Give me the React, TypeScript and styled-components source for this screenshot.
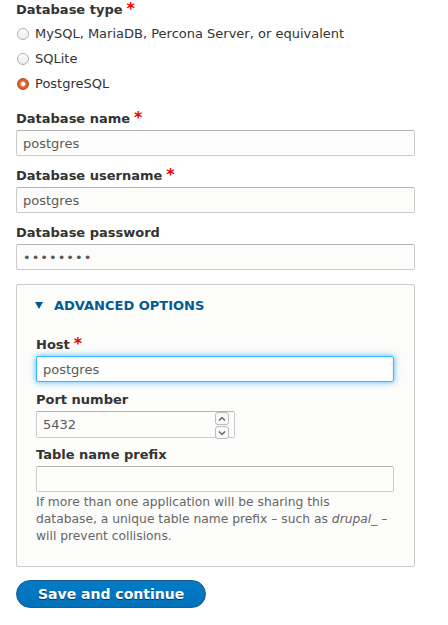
import { useState } from 'react';
import styled, { createGlobalStyle, css } from 'styled-components';

const GlobalStyle = createGlobalStyle`
  html, body {
    margin: 0;
    padding: 0;
    background: #fff;
  }
  body {
    font-family: "DejaVu Sans", "Liberation Sans", sans-serif;
    font-size: 13px;
    color: #333;
  }
`;

const Page = styled.form`
  width: 399px;
  padding: 1px 16px 0;
  display: flex;
  flex-direction: column;
`;

const Item = styled.div<{ $gap?: number }>`
  display: flex;
  flex-direction: column;
  margin-bottom: ${({ $gap }) => ($gap ?? 11)}px;
`;

const Label = styled.label`
  display: block;
  font-weight: bold;
  line-height: 18px;
  margin-bottom: 2px;
  color: #333;
`;

const Required = styled.span`
  color: #e00;
  font-size: 16px;
  margin-left: 4px;
  line-height: 10px;
`;

const RadioRow = styled.label`
  display: flex;
  align-items: center;
  height: 25px;
  color: #333;
  cursor: pointer;
`;

const Radio = styled.span<{ $checked?: boolean }>`
  width: 10px;
  height: 10px;
  border-radius: 50%;
  margin: 0 6px 0 1px;
  box-sizing: content-box;
  ${({ $checked }) =>
    $checked
      ? css`
          border: 1px solid #b8491c;
          background: radial-gradient(circle, #fff 0, #fbe3d8 2px, #e0632f 3px, #d4541f 100%);
        `
      : css`
          border: 1px solid #b0b0b0;
          background: linear-gradient(#fdfdfd, #ececec);
        `}
`;

const TextInput = styled.input<{ $focus?: boolean; $width?: number }>`
  box-sizing: border-box;
  width: ${({ $width }) => ($width ? `${$width}px` : '100%')};
  height: 26px;
  padding: 0 6px;
  font-family: inherit;
  font-size: 13px;
  color: #595959;
  background: #fcfcfa;
  border: 1px solid #ccc;
  border-top-color: #b3b3b3;
  border-radius: 2px;
  outline: none;
  ${({ $focus }) =>
    $focus &&
    css`
      background: #fff;
      border-color: #40b6ff;
      box-shadow: inset 0 1px 3px rgba(0, 0, 0, 0.1), 0 0 6px #40b6ff;
    `}
  &[type='password'] {
    letter-spacing: 1px;
  }
  &::-webkit-inner-spin-button,
  &::-webkit-outer-spin-button {
    -webkit-appearance: none;
    margin: 0;
  }
`;

const NumberWrap = styled.div`
  position: relative;
  width: 199px;
`;

const Spinner = styled.div`
  position: absolute;
  right: 6px;
  top: 1px;
  display: flex;
  flex-direction: column;
  gap: 1px;
`;

const SpinButton = styled.span`
  width: 12px;
  height: 11px;
  border: 1px solid #bbb;
  border-radius: 3px;
  background: #f8f8f8;
  display: flex;
  align-items: center;
  justify-content: center;
`;

const Fieldset = styled.fieldset`
  margin: 14px 0 13px;
  padding: 10px 20px 21px 19px;
  border: 1px solid #ccc;
  border-radius: 2px;
  background: #fcfcfa;
  min-width: 0;
`;

const Summary = styled.div`
  display: flex;
  align-items: center;
  height: 20px;
  margin-bottom: 21px;
  color: #005b94;
  font-weight: bold;
  text-transform: uppercase;
  cursor: pointer;
`;

const Caret = styled.span`
  width: 0;
  height: 0;
  border-left: 4px solid transparent;
  border-right: 4px solid transparent;
  border-top: 7px solid #005b94;
  margin: 0 11px 0 -1px;
`;

const Description = styled.div`
  margin-top: 2px;
  max-width: 352px;
  font-size: 12.3px;
  line-height: 17px;
  color: #666;
`;

const PrimaryButton = styled.button`
  align-self: flex-start;
  height: 28px;
  padding: 0 21px 0 21px;
  border: 1px solid #1e5c90;
  border-radius: 20em;
  background: linear-gradient(to bottom, #007bc6, #0071b8);
  color: #fff;
  font-family: inherit;
  font-size: 14px;
  font-weight: bold;
  text-shadow: 0 1px rgba(0, 0, 0, 0.5);
  cursor: pointer;
`;

const Chevron = ({ up }: { up?: boolean }) => (
  <svg width="8" height="6" viewBox="0 0 8 6">
    <path d={up ? 'M1 4.5 L4 1.5 L7 4.5' : 'M1 1.5 L4 4.5 L7 1.5'} fill="none" stroke="#555" strokeWidth="1.2" />
  </svg>
);

const dbTypes = [
  { id: 'mysql', label: 'MySQL, MariaDB, Percona Server, or equivalent' },
  { id: 'sqlite', label: 'SQLite' },
  { id: 'pgsql', label: 'PostgreSQL' },
];

const App = () => {
  const [dbType, setDbType] = useState('pgsql');

  return (
    <>
      <GlobalStyle />
      <Page onSubmit={(e) => e.preventDefault()}>
        <Item $gap={14}>
          <Label>
            Database type<Required>*</Required>
          </Label>
          {dbTypes.map((t) => (
            <RadioRow key={t.id} onClick={() => setDbType(t.id)}>
              <Radio $checked={dbType === t.id} />
              {t.label}
            </RadioRow>
          ))}
        </Item>

        <Item>
          <Label>
            Database name<Required>*</Required>
          </Label>
          <TextInput defaultValue="postgres" />
        </Item>

        <Item>
          <Label>
            Database username<Required>*</Required>
          </Label>
          <TextInput defaultValue="postgres" />
        </Item>

        <Item $gap={0}>
          <Label>Database password</Label>
          <TextInput type="password" defaultValue="postgres" />
        </Item>

        <Fieldset>
          <Summary>
            <Caret />
            Advanced options
          </Summary>

          <Item $gap={9}>
            <Label>
              Host<Required>*</Required>
            </Label>
            <TextInput $focus defaultValue="postgres" />
          </Item>

          <Item $gap={8}>
            <Label>Port number</Label>
            <NumberWrap>
              <TextInput type="number" defaultValue="5432" style={{ height: 27 }} />
              <Spinner>
                <SpinButton>
                  <Chevron up />
                </SpinButton>
                <SpinButton>
                  <Chevron />
                </SpinButton>
              </Spinner>
            </NumberWrap>
          </Item>

          <Item $gap={0}>
            <Label>Table name prefix</Label>
            <TextInput />
            <Description>
              If more than one application will be sharing this database, a unique table name prefix – such as{' '}
              <em>drupal_</em> – will prevent collisions.
            </Description>
          </Item>
        </Fieldset>

        <PrimaryButton type="submit">Save and continue</PrimaryButton>
      </Page>
    </>
  );
};

export default App;
